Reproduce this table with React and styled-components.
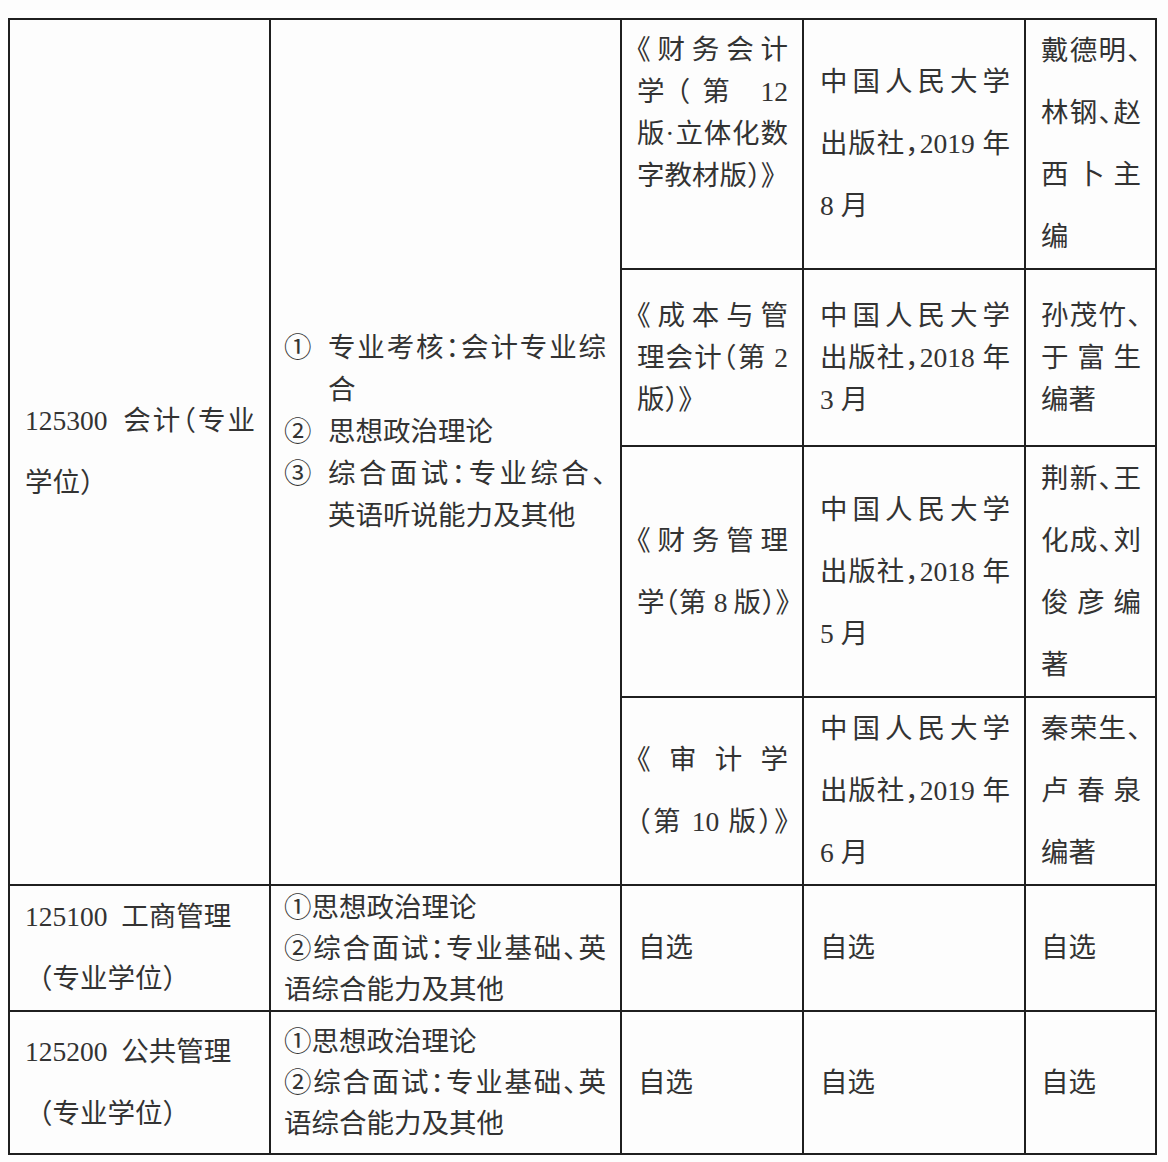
import React from 'react';
import styled, { createGlobalStyle } from 'styled-components';

const Page = createGlobalStyle`
  body {
    margin: 0;
    background: #fdfdfd;
  }
`;

const Table = styled.table`
  margin: 18px 0 0 8px;
  width: 1149px;
  border-collapse: collapse;
  table-layout: fixed;
  font-family: "Liberation Serif", "Noto Sans CJK SC", serif;
  font-size: 27.5px;
  color: #333;
  font-feature-settings: "halt";
`;

const Row = styled.tr`
  height: ${(p) => p.$h}px;
`;

const Cell = styled.td`
  border: 2px solid #1f1f1f;
  padding: ${(p) => p.$pad || '0 14px 0 15px'};
  vertical-align: ${(p) => (p.$top ? 'top' : 'middle')};
  line-height: ${(p) => p.$lh || 62}px;
`;

const Line = styled.div`
  text-align: ${(p) => (p.$j ? 'justify' : 'left')};
  text-align-last: ${(p) => (p.$j ? 'justify' : 'auto')};
  letter-spacing: ${(p) => (p.$j === 2 ? '-1.2px' : 'normal')};
  font-feature-settings: ${(p) => (p.$full ? 'normal' : '"halt"')};
`;

const Item = styled.div`
  display: flex;
`;

const Marker = styled.span`
  flex: 0 0 44px;
`;

const ItemText = styled.div`
  flex: 1;
`;

// each line: [text, justify (0 left, 1 justify, 2 justify tight), full-width punctuation]
const Lines = ({ lines }) =>
  lines.map(([t, j, full], i) => (
    <Line key={i} $j={j} $full={full}>
      {t}
    </Line>
  ));

const books = [
  {
    h: 249,
    top: true,
    titleLh: 42,
    title: [['《财务会计', 1], ['学（第 12', 1], ['版·立体化数', 1], ['字教材版）》', 0]],
    pub: [['中国人民大学', 1], ['出版社，2019 年', 1], ['8 月', 0]],
    authors: [['戴德明、', 1], ['林钢、赵', 1], ['西 卜 主', 1], ['编', 0]],
  },
  {
    h: 177,
    lh: 42,
    titleLh: 42,
    title: [['《成本与管', 1], ['理会计（第 2', 1], ['版）》', 0]],
    pub: [['中国人民大学', 1], ['出版社，2018 年', 1], ['3 月', 0]],
    authors: [['孙茂竹、', 1], ['于 富 生', 1], ['编著', 0]],
  },
  {
    h: 251,
    title: [['《财务管理', 1], ['学（第 8 版）》', 2]],
    pub: [['中国人民大学', 1], ['出版社，2018 年', 1], ['5 月', 0]],
    authors: [['荆新、王', 1], ['化成、刘', 1], ['俊 彦 编', 1], ['著', 0]],
  },
  {
    h: 188,
    title: [['《 审 计 学', 1], ['（第 10 版）》', 1]],
    pub: [['中国人民大学', 1], ['出版社，2019 年', 1], ['6 月', 0]],
    authors: [['秦荣生、', 1], ['卢 春 泉', 1], ['编著', 0]],
  },
];

const others = [
  { h: 126, code: '125100\u2002工商管理' },
  { h: 143, code: '125200\u2002公共管理' },
];

export default function App() {
  return (
    <>
      <Page />
      <Table>
        <colgroup>
          <col style={{ width: 261 }} />
          <col style={{ width: 351 }} />
          <col style={{ width: 182 }} />
          <col style={{ width: 222 }} />
          <col style={{ width: 131 }} />
        </colgroup>
        <tbody>
          {books.map((b, i) => (
            <Row key={i} $h={b.h}>
              {i === 0 && (
                <>
                  <Cell rowSpan={4} $pad="0 14px 0 15px">
                    <Lines lines={[['125300\u2002会计（专业', 1], ['学位）', 0]]} />
                  </Cell>
                  <Cell rowSpan={4} $lh={42} $pad="0 14px 40px 13px">
                    <Item>
                      <Marker>①</Marker>
                      <ItemText>
                        <Lines lines={[['专业考核：会计专业综', 1], ['合', 0]]} />
                      </ItemText>
                    </Item>
                    <Item>
                      <Marker>②</Marker>
                      <ItemText>思想政治理论</ItemText>
                    </Item>
                    <Item>
                      <Marker>③</Marker>
                      <ItemText>
                        <Lines lines={[['综合面试：专业综合、', 1], ['英语听说能力及其他', 0]]} />
                      </ItemText>
                    </Item>
                  </Cell>
                </>
              )}
              <Cell $top={b.top} $lh={b.titleLh} $pad={b.top ? '9px 14px 0 15px' : undefined}>
                <Lines lines={b.title} />
              </Cell>
              <Cell $lh={b.lh} $pad="0 14px 0 16px">
                <Lines lines={b.pub} />
              </Cell>
              <Cell $lh={b.lh} $pad="0 14px 0 15px">
                <Lines lines={b.authors} />
              </Cell>
            </Row>
          ))}
          {others.map((o, i) => (
            <Row key={i} $h={o.h}>
              <Cell>
                <Lines lines={[[o.code, 0], ['（专业学位）', 0, 1]]} />
              </Cell>
              <Cell $lh={41} $pad="0 14px 0 13px">
                <Lines
                  lines={[
                    ['①思想政治理论', 0],
                    ['②综合面试：专业基础、英', 1],
                    ['语综合能力及其他', 0],
                  ]}
                />
              </Cell>
              <Cell $pad="0 14px 0 16px">自选</Cell>
              <Cell $pad="0 14px 0 16px">自选</Cell>
              <Cell $pad="0 14px 0 15px">自选</Cell>
            </Row>
          ))}
        </tbody>
      </Table>
    </>
  );
}
